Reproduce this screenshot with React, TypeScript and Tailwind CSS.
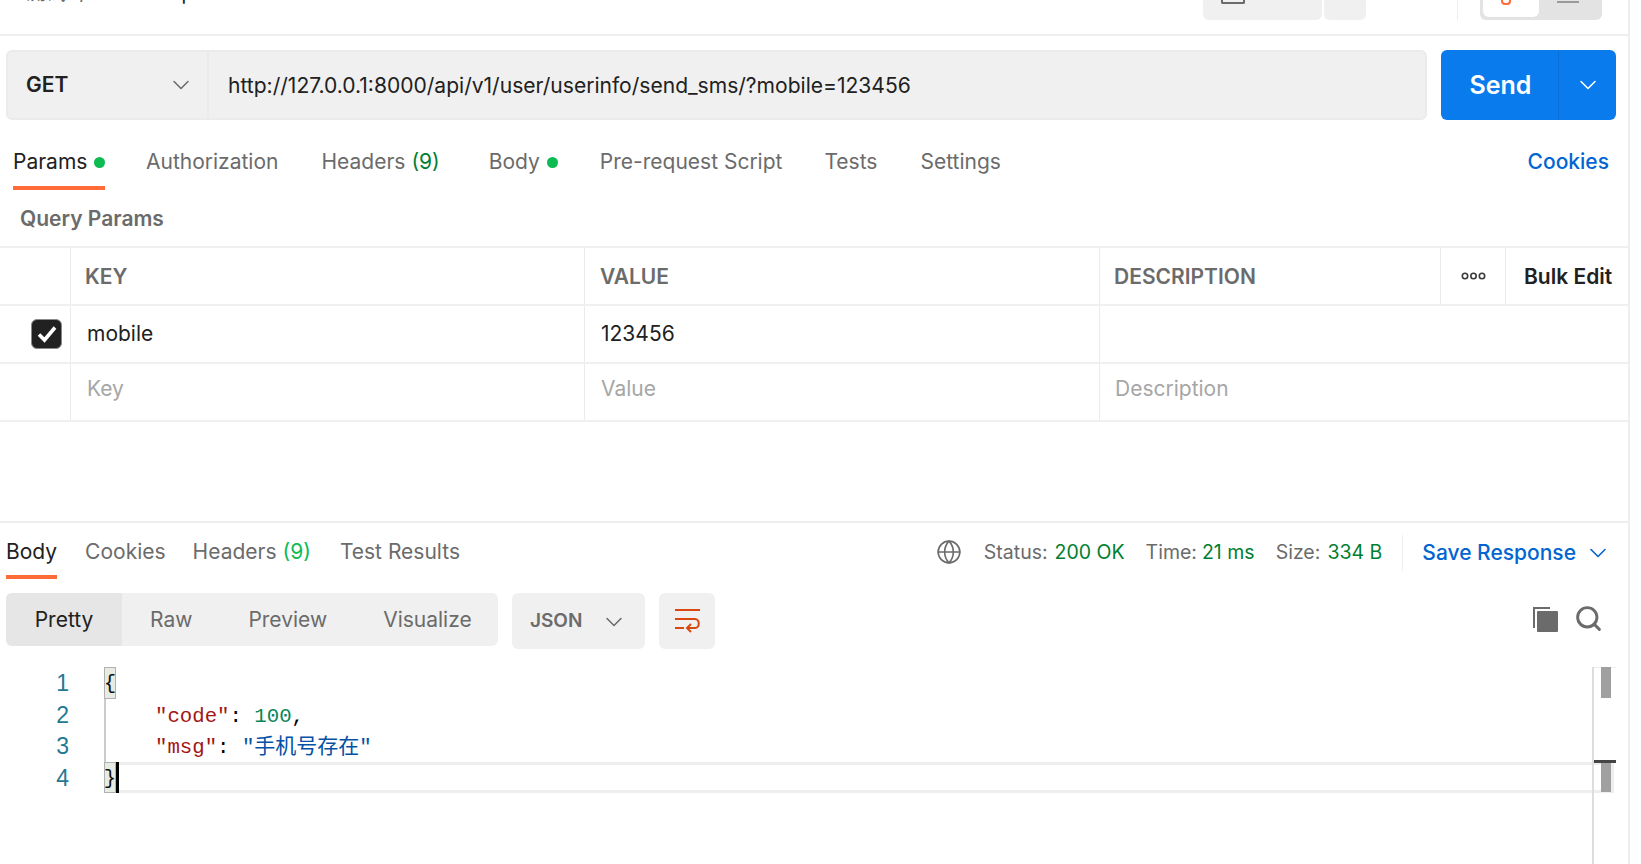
import React from "react";
import { ChevronDown, Globe, Search } from "lucide-react";

const Dot = () => <span className="inline-block w-[11px] h-[11px] rounded-full bg-[#0cbb52] ml-[7px]" />;

function Tab({ children, active, className = "" }: { children: React.ReactNode; active?: boolean; className?: string }) {
  return (
    <div className={`relative h-full flex items-center whitespace-nowrap ${active ? "text-[#212121]" : "text-[#6b6b6b]"} ${className}`}>
      {children}
      {active && <div className="absolute left-0 right-0 bottom-0 h-[4px] bg-[#ff6c37]" />}
    </div>
  );
}

function CopyIcon() {
  return (
    <svg width="27" height="26" viewBox="0 0 27 26" fill="none">
      <path d="M1 1h17v2H3v19H1z" fill="#6b6b6b" />
      <rect x="5" y="5" width="21" height="21" rx="1" fill="#6b6b6b" />
    </svg>
  );
}

function WrapIcon() {
  return (
    <svg width="27" height="26" viewBox="0 0 27 26" fill="none" stroke="#d9480f" strokeWidth="2">
      <path d="M1 2h25" />
      <path d="M1 11h20c5 0 5 9 0 9h-7" />
      <path d="M17 16l-4 4 4 4" />
      <path d="M1 20h9" />
    </svg>
  );
}

function DotsIcon() {
  return (
    <svg width="25" height="8" viewBox="0 0 25 8" fill="none" stroke="#3a3a3a" strokeWidth="1.6">
      <circle cx="4" cy="4" r="2.7" />
      <circle cx="12.5" cy="4" r="2.7" />
      <circle cx="21" cy="4" r="2.7" />
    </svg>
  );
}

function Check() {
  return (
    <div className="w-[31px] h-[30px] rounded-[6px] bg-[#212121] border border-[#8a8a8a] flex items-center justify-center">
      <svg width="22" height="20" viewBox="0 0 22 20" fill="none" stroke="#fff" strokeWidth="3.6">
        <path d="M3 10.5l5.5 5.5L19 3.5" />
      </svg>
    </div>
  );
}

const colsClass = "grid grid-cols-[70px_514px_515px_341px_65px_1fr]";
const cellLine = "border-l border-[#ebebeb]";

export default function App() {
  return (
    <div
      className="w-[1641px] h-[864px] overflow-hidden bg-white text-[21px] text-[#212121] flex flex-col"
      style={{ fontFamily: "Inter, 'Noto Sans CJK SC', sans-serif" }}
    >
      <div className="w-[1630px] h-[864px] border-r-2 border-[#eeeeee] flex flex-col shrink-0">
        {/* clipped top bar */}
        <div className="h-[36px] shrink-0 border-b-2 border-[#eeeeee] relative flex overflow-hidden">
          <div className="absolute left-[26px] top-[-22px] text-[20px] text-[#6b6b6b] whitespace-nowrap">
            测试1 /<span className="ml-[24px] text-[#212121]">sms request</span>
          </div>
          <div className="ml-[1203px] w-[119px] h-[20px] bg-[#f0f0f0] rounded-b-[6px] flex justify-center">
            <div className="w-[24px] h-[4px] border-2 border-t-0 border-[#6b6b6b] rounded-b-[2px] -ml-[60px]" />
          </div>
          <div className="ml-[2px] w-[42px] h-[20px] bg-[#f0f0f0] rounded-b-[6px]" />
          <div className="ml-[91px] w-[1px] h-[20px] bg-[#eeeeee]" />
          <div className="ml-[22px] w-[122px] h-[20px] bg-[#e3e3e3] rounded-b-[6px] flex">
            <div className="ml-[3px] w-[56px] h-[17px] bg-white rounded-b-[6px] flex justify-center">
              <div className="w-[10px] h-[5px] border-2 border-t-0 border-[#ff6c37] rounded-b-[4px] -ml-[10px]" />
            </div>
            <div className="flex-1 flex justify-center pr-[6px]">
              <div className="w-[22px] h-[3px] border-b-2 border-[#9a9a9a]" />
            </div>
          </div>
        </div>

        {/* URL row */}
        <div className="h-[70px] mt-[14px] shrink-0 flex pl-[6px]">
          <div className="w-[1421px] flex bg-[#f0f0f0] border-2 border-[#ebebeb] rounded-[6px]">
            <div className="w-[201px] flex items-center justify-between pl-[18px] pr-[12px] border-r-2 border-[#ebebeb] font-semibold text-[21px]">
              <span>GET</span>
              <ChevronDown size={28} strokeWidth={1.3} color="#6b6b6b" />
            </div>
            <div className="flex items-center pl-[19px] pt-[1px] text-[21.05px]">http://127.0.0.1:8000/api/v1/user/userinfo/send_sms/?mobile=123456</div>
          </div>
          <div className="ml-[14px] w-[175px] flex bg-[#097bed] rounded-[6px] text-white">
            <div className="w-[118px] flex items-center justify-center font-semibold text-[25px] border-r border-[#0a6fd6] pl-[2px] pt-[2px]">Send</div>
            <div className="flex-1 flex items-center justify-center">
              <ChevronDown size={28} strokeWidth={1.3} color="#fff" />
            </div>
          </div>
        </div>

        {/* Request tabs */}
        <div className="h-[70px] shrink-0 flex pl-[13px]">
          <Tab active className="w-[92px] pt-[14px]">Params<Dot /></Tab>
          <Tab className="ml-[41px] pt-[14px]">Authorization</Tab>
          <Tab className="ml-[43px] pt-[14px]">Headers<span className="ml-[6px] text-[#007f31]">(9)</span></Tab>
          <Tab className="ml-[49px] pt-[14px]">Body<Dot /></Tab>
          <Tab className="ml-[42px] pt-[14px]">Pre-request Script</Tab>
          <Tab className="ml-[42px] pt-[14px]">Tests</Tab>
          <Tab className="ml-[43px] pt-[14px]">Settings</Tab>
          <div className="ml-auto mr-[19px] pt-[14px] flex items-center font-medium text-[#0265d2]">Cookies</div>
        </div>

        {/* Query params */}
        <div className="h-[56px] shrink-0 pl-[20px] pt-[1px] flex items-center font-semibold text-[#6b6b6b] text-[21px]">Query Params</div>

        {/* Params table */}
        <div className="shrink-0 border-t-2 border-[#f0f0f0]">
          <div className={`${colsClass} h-[58px] border-b-2 border-[#f0f0f0] font-semibold text-[#6b6b6b] text-[21px]`}>
            <div />
            <div className={`${cellLine} flex items-center pl-[14px] pt-[1px]`}>KEY</div>
            <div className={`${cellLine} flex items-center pl-[15px] pt-[1px]`}>VALUE</div>
            <div className={`${cellLine} flex items-center pl-[14px] pt-[1px]`}>DESCRIPTION</div>
            <div className={`${cellLine} flex items-center justify-center`}><DotsIcon /></div>
            <div className={`${cellLine} flex items-center pl-[18px] pt-[1px] text-[#212121] whitespace-nowrap`}>Bulk Edit</div>
          </div>
          <div className={`${colsClass} h-[58px] border-b-2 border-[#f0f0f0]`}>
            <div className="flex items-center justify-end pr-[8px]"><Check /></div>
            <div className={`${cellLine} flex items-center pl-[16px]`}>mobile</div>
            <div className={`${cellLine} flex items-center pl-[16px]`}>123456</div>
            <div className={`${cellLine} col-span-3`} />
          </div>
          <div className={`${colsClass} h-[58px] border-b-2 border-[#f0f0f0] text-[#a6a6a6]`}>
            <div />
            <div className={`${cellLine} flex items-center pl-[16px] pb-[6px]`}>Key</div>
            <div className={`${cellLine} flex items-center pl-[16px] pb-[6px]`}>Value</div>
            <div className={`${cellLine} col-span-3 flex items-center pl-[15px] pb-[6px]`}>Description</div>
          </div>
        </div>

        <div className="h-[99px] shrink-0" />

        {/* Response header */}
        <div className="h-[58px] shrink-0 border-t-2 border-[#eeeeee] flex pl-[6px] items-stretch">
          <Tab active className="pt-[2px]">Body</Tab>
          <Tab className="ml-[28px] pt-[2px]">Cookies</Tab>
          <Tab className="ml-[27px] pt-[2px]">Headers<span className="ml-[6px] text-[#0cbb52]">(9)</span></Tab>
          <Tab className="ml-[29px] pt-[2px]">Test Results</Tab>
          <div className="ml-auto flex items-start pt-[12px] h-full text-[19.5px]">
            <Globe size={26} strokeWidth={1.5} color="#6b6b6b" className="mt-[4px]" />
            <div className="ml-[22px] h-[36px] flex items-center text-[#6b6b6b] whitespace-nowrap">
              Status:<span className="ml-[7px] text-[#007f31]">200 OK</span>
              <span className="ml-[21px]">Time:</span><span className="ml-[5px] text-[#007f31]">21 ms</span>
              <span className="ml-[21px]">Size:</span><span className="ml-[7px] text-[#007f31]">334 B</span>
            </div>
            <div className="ml-[20px] w-[1px] h-[36px] bg-[#eeeeee]" />
            <div className="ml-[19px] h-[36px] flex items-center font-medium text-[#0265d2] text-[21px] whitespace-nowrap">Save Response</div>
            <ChevronDown size={28} strokeWidth={1.4} color="#0265d2" className="ml-[8px] mr-[16px] mt-[4px]" />
          </div>
        </div>

        {/* Response toolbar */}
        <div className="h-[56px] mt-[14px] shrink-0 flex pl-[6px] items-start">
          <div className="w-[492px] h-[53px] bg-[#f0f0f0] rounded-[6px] flex overflow-hidden text-[#6b6b6b]">
            <div className="w-[116px] bg-[#e6e6e6] text-[#212121] flex items-center justify-center">Pretty</div>
            <div className="ml-[28px] flex items-center">Raw</div>
            <div className="ml-[56px] flex items-center">Preview</div>
            <div className="ml-[56px] flex items-center">Visualize</div>
          </div>
          <div className="ml-[14px] w-[133px] h-[56px] bg-[#f0f0f0] rounded-[6px] flex items-center justify-between pl-[18px] pr-[17px] pt-[1px] font-semibold text-[#6b6b6b] text-[19px]">
            <span>JSON</span>
            <ChevronDown size={28} strokeWidth={1.3} color="#6b6b6b" />
          </div>
          <div className="ml-[14px] w-[56px] h-[56px] bg-[#f0f0f0] rounded-[6px] flex items-center justify-center"><WrapIcon /></div>
          <div className="ml-auto mr-[25px] mt-[11px] flex items-center gap-[15px]">
            <CopyIcon />
            <Search size={29} strokeWidth={2.4} color="#6b6b6b" />
          </div>
        </div>

        {/* Code */}
        <div
          className="flex-1 mt-[18px] flex relative text-[20.7px] leading-[31px]"
          style={{ fontFamily: "'Liberation Mono', 'Noto Sans CJK SC', monospace" }}
        >
          <div className="w-[69px] text-right text-[#237893] text-[23px] leading-[31.5px] shrink-0 pt-[1px]" style={{ fontFamily: "'Liberation Sans', sans-serif" }}>
            <div>1</div><div>2</div><div>3</div><div>4</div>
          </div>
          <div className="ml-[35px] flex-1 flex flex-col">
            <div className="w-[12px] h-[32px] bg-[#e6ebe3] border border-[#b0b0b0] text-[#111] overflow-hidden flex justify-center">{"{"}</div>
            <div className="h-[31px] border-l-[2px] border-[#cccccc] pl-[49px] pt-[2px] whitespace-pre">
              <span className="text-[#a31515]">"code"</span><span className="text-black">: </span><span className="text-[#098658]">100</span><span className="text-black">,</span>
            </div>
            <div className="h-[32px] border-l-[2px] border-[#cccccc] pl-[49px] pt-[2px] whitespace-pre">
              <span className="text-[#a31515]">"msg"</span><span className="text-black">: </span><span className="text-[#0451a5]">"<span className="text-[21px]">手机号存在</span>"</span>
            </div>
            <div className="h-[31px] flex mr-[14px] border-y-[3px] border-r-[3px] border-[#eeeeee]">
              <div className="w-[12px] -my-[3px] h-[31px] bg-[#e6ebe3] border border-[#b0b0b0] text-[#111] overflow-hidden flex justify-center shrink-0">{"}"}</div>
              <div className="w-[3px] -my-[3px] h-[31px] bg-black" />
            </div>
          </div>
          {/* Minimap / scrollbar overlay */}
          <div className="absolute left-[1592px] top-0 bottom-0 w-[24px] border-l-2 border-[#dddddd]">
            <div className="h-[1px] bg-[#eeeeee]" />
            <div className="absolute left-[7px] top-0 w-[10px] h-[31px] bg-[#a0a0a0]" />
            <div className="absolute left-0 right-0 top-[93px] h-[3px] bg-[#444444]" />
            <div className="absolute left-[7px] top-[96px] w-[10px] h-[29px] bg-[#a0a0a0]" />
          </div>
        </div>
      </div>
    </div>
  );
}
